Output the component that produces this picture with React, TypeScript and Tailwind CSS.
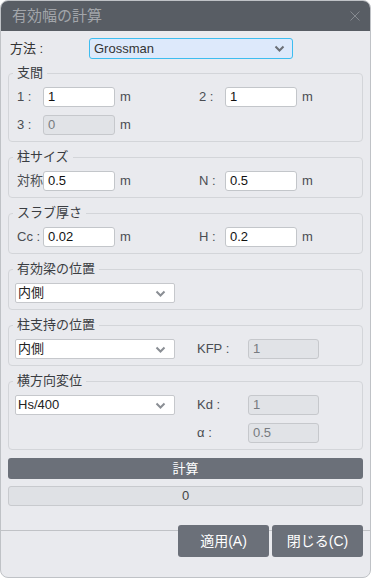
import React from "react";

const font = { fontFamily: '"Liberation Sans", "Noto Sans CJK JP", sans-serif' };

const Chevron = ({ dark }: { dark?: boolean }) => (
  <svg width="11" height="7" viewBox="0 0 11 7" className="shrink-0">
    <path d="M1.5 1.5 L5.5 5.5 L9.5 1.5" fill="none" stroke={dark ? "#6b6f75" : "#8a8e94"} strokeWidth="2" />
  </svg>
);

const Input = ({ value, disabled, w = "w-[72px]" }: { value: string; disabled?: boolean; w?: string }) => (
  <div
    className={`${w} h-[20px] rounded-[3px] border flex items-center pl-[4px] text-[13px] ${
      disabled ? "bg-[#e1e3e7] border-[#c6c8cc] text-[#777b80]" : "bg-white border-[#c3c6ca] text-[#111]"
    }`}
  >
    {value}
  </div>
);

const Select = ({ value }: { value: string }) => (
  <div className="w-[160px] h-[20px] bg-white border border-[#c6c8cc] rounded-[2px] flex items-center justify-between pl-[2px] pr-[8px] text-[13px] text-[#222]">
    <span>{value}</span>
    <Chevron />
  </div>
);

const Field = ({ label, value, disabled }: { label: string; value: string; disabled?: boolean }) => (
  <div className="flex items-center">
    <span className="w-[28px] pl-[2px] text-[13px] text-[#4a4d52] whitespace-pre">{label}</span>
    <Input value={value} disabled={disabled} />
    <span className="ml-[5px] text-[13px] text-[#4a4d52]">m</span>
  </div>
);

const Group = ({ title, children }: { title: string; children: React.ReactNode }) => (
  <fieldset className="border border-[#d3d5d9] rounded-[4px] px-[6px] pt-[6px] pb-[6px] m-0 min-w-0">
    <legend className="-ml-[2px] px-[4px] text-[13px] leading-[16px] text-[#3a3d42]">{title}</legend>
    {children}
  </fieldset>
);

export default function App() {
  return (
    <div className="w-[371px] h-[578px] bg-white" style={font}>
      <div className="w-full h-full rounded-[8px] overflow-hidden border border-[#bfc2c6] bg-[#e9eaee] flex flex-col">
        {/* title bar */}
        <div className="h-[30px] bg-[#585d64] flex items-center justify-between pl-[11px] pr-[10px] shrink-0">
          <span className="text-[15px] text-[#a2a5aa]">有効幅の計算</span>
          <svg width="10" height="10" viewBox="0 0 10 10">
            <path d="M0.5 0.5 L9.5 9.5 M9.5 0.5 L0.5 9.5" stroke="#868a90" strokeWidth="1" />
          </svg>
        </div>

        <div className="px-[7px] pt-[7px] flex flex-col gap-[8px]">
          {/* method */}
          <div className="flex items-center h-[21px]">
            <span className="w-[81px] pl-[2px] text-[13px] text-[#333]">方法 :</span>
            <div className="w-[204px] h-[21px] bg-[#dde9fb] border border-[#3dbdf0] rounded-[3px] flex items-center justify-between pl-[4px] pr-[7px] text-[13px] text-[#333]">
              <span>Grossman</span>
              <Chevron dark />
            </div>
          </div>

          <div className="flex flex-col gap-[7px] mt-[-2px]">
            <Group title="支間">
              <div className="flex flex-col gap-[8px]">
                <div className="grid grid-cols-[182px_1fr]">
                  <Field label="1 :" value="1" />
                  <Field label="2 :" value="1" />
                </div>
                <Field label="3 :" value="0" disabled />
              </div>
            </Group>

            <Group title="柱サイズ">
              <div className="grid grid-cols-[182px_1fr]">
                <Field label="対称" value="0.5" />
                <Field label="N :" value="0.5" />
              </div>
            </Group>

            <Group title="スラブ厚さ">
              <div className="grid grid-cols-[182px_1fr]">
                <Field label="Cc :" value="0.02" />
                <Field label="H :" value="0.2" />
              </div>
            </Group>

            <Group title="有効梁の位置">
              <Select value="内側" />
            </Group>

            <Group title="柱支持の位置">
              <div className="grid grid-cols-[182px_1fr] items-center">
                <Select value="内側" />
                <div className="flex items-center">
                  <span className="w-[51px] text-[13px] text-[#4a4d52]">KFP :</span>
                  <Input value="1" disabled w="w-[71px]" />
                </div>
              </div>
            </Group>

            <Group title="横方向変位">
              <div className="grid grid-cols-[182px_1fr]">
                <Select value="Hs/400" />
                <div className="flex flex-col gap-[8px]">
                  <div className="flex items-center">
                    <span className="w-[51px] text-[13px] text-[#4a4d52]">Kd :</span>
                    <Input value="1" disabled w="w-[71px]" />
                  </div>
                  <div className="flex items-center">
                    <span className="w-[51px] text-[13px] text-[#4a4d52]">α :</span>
                    <Input value="0.5" disabled w="w-[71px]" />
                  </div>
                </div>
              </div>
            </Group>
          </div>

          <div className="flex flex-col gap-[7px]">
            <button className="h-[21px] w-full rounded-[3px] bg-[#6b7079] text-white text-[13px]">計算</button>
            <div className="h-[20px] w-full rounded-[3px] bg-[#dfe1e5] border border-[#c8cace] flex items-center justify-center text-[13px] text-[#444]">
              0
            </div>
          </div>
        </div>

        {/* footer */}
        <div className="mt-[24px] border-t border-[#c0c2c6] flex justify-end gap-[3px] pr-[7px]">
          <button className="-mt-[6px] w-[91px] h-[32px] rounded-[3px] bg-[#6b7079] text-white text-[14px]">適用(A)</button>
          <button className="-mt-[6px] w-[91px] h-[32px] rounded-[3px] bg-[#6b7079] text-white text-[14px]">閉じる(C)</button>
        </div>
      </div>
    </div>
  );
}
